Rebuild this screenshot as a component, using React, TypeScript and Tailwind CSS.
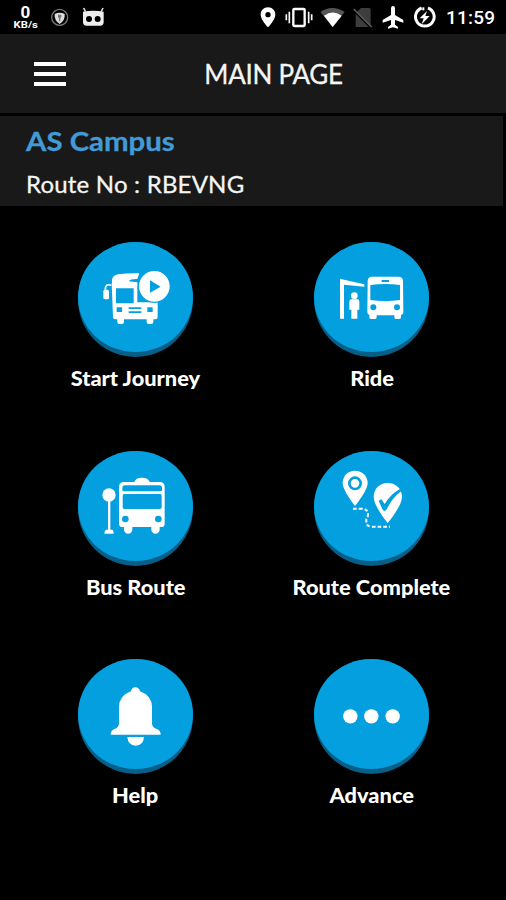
import React from 'react';

const StatusBar = () => (
  <div className="h-[34px] flex justify-between pl-[13px] pr-[10px] text-white">
    <div className="flex">
      <div className="w-[25px] pt-[4px] flex flex-col items-center font-bold">
        <span className="text-[17px] leading-[17px] font-['Roboto',sans-serif]">0</span>
        <span className="text-[9px] leading-[9px] font-['Roboto',sans-serif] scale-x-[1.25]">KB/s</span>
      </div>
      <svg className="ml-[12px] w-[20px] h-[34px]" viewBox="150 0 60 102">
        <circle cx="179" cy="52" r="24" fill="none" stroke="#777" strokeWidth="4" />
        <path d="M164 42q15-8 30 0q2 19-15 30q-17-11-15-30z" fill="#ddd" />
        <path d="M174 44h10v8l-3 3v9h-4v-9l-3-3z" fill="#777" />
      </svg>
      <svg className="ml-[11px] w-[24px] h-[34px]" viewBox="243 0 72 102">
        <path d="M249 35q31-6 62 0v31q0 11-11 11h-40q-11 0-11-11z" fill="#eee" />
        <path d="M251 24l6 12M309 24l-6 12" fill="none" stroke="#ddd" strokeWidth="5" />
        <circle cx="267" cy="57" r="9" />
        <circle cx="293" cy="57" r="9" />
      </svg>
    </div>
    <div className="flex">
      <svg className="w-[16px] h-[34px]" viewBox="21 0 48 102" fill="#fff">
        <path fillRule="evenodd" d="M45 22c-13 0-22 10-22 22c0 16 22 38 22 38s22-22 22-38c0-12-9-22-22-22zm0 14a8 8 0 1 1 0 16a8 8 0 0 1 0-16z" />
      </svg>
      <svg className="ml-[9px] w-[28px] h-[34px]" viewBox="95 0 84 102" stroke="#fff">
        <rect x="120" y="27" width="34" height="51" rx="3" fill="none" strokeWidth="7" />
        <path d="M108 35v35M99 43v18M166 35v35M175 43v18" strokeWidth="5" />
      </svg>
      <svg className="ml-[7px] w-[26px] h-[34px]" viewBox="200 0 78 102">
        <path d="M201 36q36-24 73 0l-36 45z" fill="#555" />
        <path d="M212 47q26-19 53 0l-27 34z" fill="#fff" />
      </svg>
      <svg className="ml-[7px] w-[21px] h-[34px]" viewBox="299 0 63 102">
        <path d="M323 24h24q5 0 5 5v52h-45v-42z" fill="#3d3d3d" />
        <path d="M302 33l50 50" stroke="#000" strokeWidth="5" />
        <path d="M301 27l54 54" stroke="#5a5a5a" strokeWidth="5" />
      </svg>
      <svg className="ml-[8px] w-[22px] h-[34px]" viewBox="385 0 66 102" fill="#fff">
        <path d="M418 18q6 0 6 7v20l25 15v8l-25-8v14l9 7v5l-15-4l-15 4v-5l9-7v-14l-25 8v-8l25-15v-20q0-7 6-7z" />
      </svg>
      <svg className="ml-[9px] w-[24px] h-[34px]" viewBox="480 0 72 102">
        <path d="M525 24a28 28 0 1 1-19 0" fill="none" stroke="#fff" strokeWidth="9" />
        <path d="M511 22v9" stroke="#fff" strokeWidth="6" />
        <path d="M522 33l-22 22h12l-6 18l24-25h-13z" fill="#fff" />
      </svg>
      <span className="ml-[9px] w-[50px] pt-px font-['Roboto',sans-serif] font-medium text-[19px] leading-[34px] tracking-[0.2px] whitespace-nowrap">
        11:59
      </span>
    </div>
  </div>
);

const StartIcon = () => (
  <svg className="w-[115px] h-[115px]" viewBox="38 20 345 345" fill="#fff">
    <path d="M140 147v-14q3-13 18-16q30-4 64-3l-6 17q-20-1-26 7l26 3v10h-76z" />
    <path d="M138 150q-18-6-18 10v8" fill="none" stroke="#fff" strokeWidth="5" />
    <rect x="114" y="163" width="17" height="29" rx="5" />
    <path fillRule="evenodd" d="M139 144h77v57h61v44q0 7-7 7h-6v8q0 6-6 6h-8q-6 0-6-6v-8h-68v8q0 6-6 6h-8q-6 0-6-6v-8h-6q-7 0-7-7zm13 15v45h53v-45zm2 57v14h16v-14zm92 0v14h16v-14zm-56 0v5h38v-5zm0 12v5h38v-5z" />
    <circle cx="267" cy="153" r="48" stroke="#049fde" strokeWidth="4" />
    <path d="M254 135v37l32-18z" fill="#049fde" />
  </svg>
);

const RideIcon = () => (
  <svg className="w-[115px] h-[115px]" viewBox="42 20 345 345" fill="#fff">
    <path d="M120 130l12 3l61 14v7l-61-6v102h-12z" />
    <circle cx="163" cy="181" r="10" />
    <path d="M154 192h18q6 0 6 7v24h-6v27h-18v-27h-6v-24q0-7 6-7z" />
    <path fillRule="evenodd" d="M216 124h80q12 0 13 12l1 94q0 8-7 8v8q0 5-5 5h-10q-5 0-5-5v-6h-53v6q0 5-5 5h-12q-5 0-5-5v-8q-6 0-6-8l1-94q1-12 13-12zm-5 25v45q44 7 89 0v-45q-44-6-89 0z" />
    <path d="M245 134h22v6h-22z" fill="#049fde" />
    <circle cx="220" cy="216" r="9" fill="#049fde" />
    <circle cx="291" cy="216" r="9" fill="#049fde" />
  </svg>
);

const BusRouteIcon = () => (
  <svg className="w-[115px] h-[115px]" viewBox="38 22 345 345" fill="#fff">
    <circle cx="131" cy="154" r="20" />
    <path d="M128 170h7v88h6q4 2 4 12h-28q1-10 5-12h6z" />
    <path fillRule="evenodd" d="M177 115h30q4-13 23-13t23 13h30q15 0 15 15v110q0 10-10 10h-5v8a12 12 0 0 1-25 0v-8h-57v8a12 12 0 0 1-25 0v-8h-4q-11 0-11-10v-110q0-15 16-15zm1 10q-7 0-7 7v8q0 3 5 3h109q5 0 5-3v-8q0-7-7-7zm-1 26q-5 0-5 5v35q0 5 5 5h107q5 0 5-5v-35q0-5-5-5z" />
    <circle cx="180" cy="226" r="10" fill="#049fde" />
    <circle cx="279" cy="226" r="10" fill="#049fde" />
  </svg>
);

const CompleteIcon = () => (
  <svg className="w-[115px] h-[115px]" viewBox="86 22 345 345" fill="#fff">
    <path d="M209 81c-21 0-37 16-37 37c0 23 37 69 37 69s38-46 38-69c0-21-17-37-38-37z" />
    <circle cx="209" cy="119" r="17" fill="none" stroke="#049fde" strokeWidth="8" />
    <path d="M307 118c-25 0-42 19-42 41c0 29 42 79 42 79s43-50 43-79c0-22-18-41-43-41z" />
    <path d="M280 171l8-4l10 14q18-30 46-45l5 5q-29 22-43 52q-3 9-9 9q-4 0-7-8z" fill="#049fde" />
    <path d="M203 195h23q22 0 22 17q0 8-5 14v9q0 14 17 14h54" fill="none" stroke="#fff" strokeWidth="6" strokeDasharray="11 6" />
  </svg>
);

const BellIcon = () => (
  <svg className="w-[115px] h-[115px]" viewBox="38 22 345 345" fill="#fff">
    <path d="M197 119q2-12 13-12t14 12q36 13 36 47v50q1 11 15 16q11 5 11 17h-150q0-12 11-17q13-5 14-16v-50q0-34 36-47z" />
    <path d="M186 256h50q-2 26-25 26t-25-26z" />
  </svg>
);

const MoreIcon = () => (
  <svg className="w-[115px] h-[115px]" viewBox="42 22 345 345" fill="#fff">
    <circle cx="151" cy="194" r="21.5" />
    <circle cx="214" cy="194" r="21.5" />
    <circle cx="278" cy="194" r="21.5" />
  </svg>
);

const menuItems = [
  { name: 'Start Journey', icon: StartIcon },
  { name: 'Ride', icon: RideIcon },
  { name: 'Bus Route', icon: BusRouteIcon },
  { name: 'Route Complete', icon: CompleteIcon },
  { name: 'Help', icon: BellIcon },
  { name: 'Advance', icon: MoreIcon },
];

export default function App() {
  return (
    <div className="w-[506px] h-[900px] bg-black overflow-hidden font-['Lato',sans-serif] text-[#f5f5f5]">
      <StatusBar />

      <header className="h-[79px] bg-[#191919] grid grid-cols-[1fr_auto_1fr] items-center pl-[41px]">
        <button className="-ml-[7px] w-[32px] flex flex-col gap-[6px]">
          <span className="h-[4px] w-full bg-white" />
          <span className="h-[4px] w-full bg-white" />
          <span className="h-[4px] w-full bg-white" />
        </button>
        <h1 className="text-[26px] leading-[30px] tracking-[-0.3px] [-webkit-text-stroke:0.3px_#f5f5f5] whitespace-nowrap">MAIN PAGE</h1>
        <span />
      </header>

      <section className="mt-[3px] w-[503px] h-[90px] bg-[#191919] pl-[26px] pt-[9px]">
        <h2 className="w-fit origin-left scale-x-[1.13] text-[26px] leading-[32px] font-bold text-[#429bd7] [-webkit-text-stroke:0.3px_#429bd7]">AS Campus</h2>
        <p className="mt-[11px] text-[24px] leading-[32px] tracking-[0.2px] [-webkit-text-stroke:0.3px_#f5f5f5]">Route No : RBEVNG</p>
      </section>

      <main className="mt-[36px] pl-[17px] grid grid-cols-[236.5px_236.5px] auto-rows-[208.7px]">
        {menuItems.map(item => {
          const Icon = item.icon;
          return (
            <button key={item.name} className="flex flex-col items-center">
              <span className="w-[115px] h-[115px] rounded-full bg-[#075f88]">
                <span className="block w-[115px] h-[110px] rounded-[50%] bg-[#049fde]">
                  <Icon />
                </span>
              </span>
              <span className="mt-[7px] scale-x-[1.09] text-[20px] leading-[28px] font-black text-white whitespace-nowrap">
                {item.name}
              </span>
            </button>
          );
        })}
      </main>
    </div>
  );
}
